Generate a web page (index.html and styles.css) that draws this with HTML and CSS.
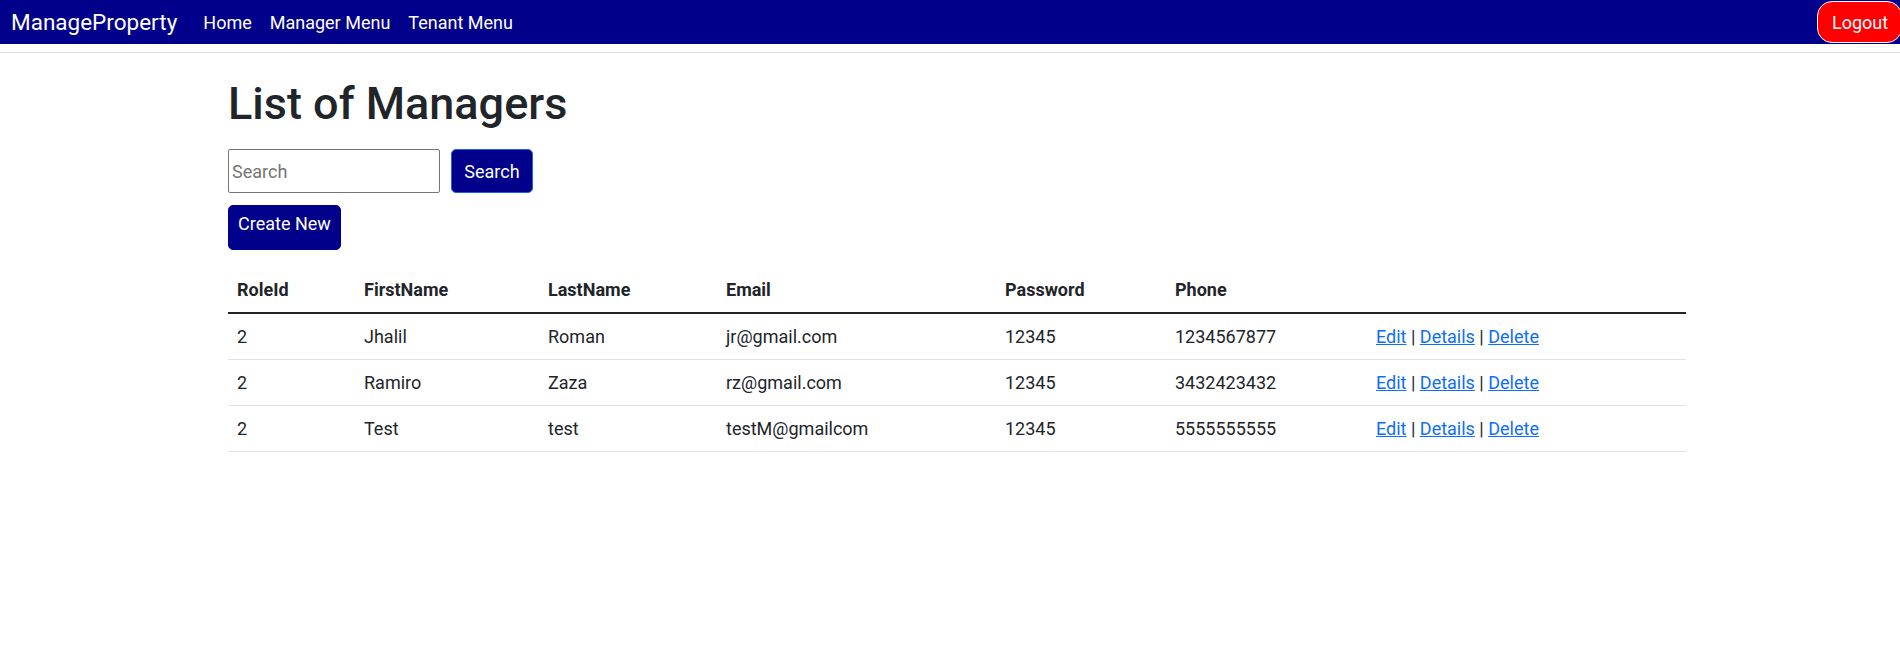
FILE: index.html
```html
<!DOCTYPE html>
<html lang="en">
<head>
<meta charset="utf-8">
<title>List of Managers - ManageProperty</title>
<link rel="stylesheet" href="styles.css">
</head>
<body>
<header class="site-header">
  <nav class="navbar">
    <a class="brand" href="#">ManageProperty</a>
    <ul class="nav-links">
      <li><a href="#">Home</a></li>
      <li><a href="#">Manager Menu</a></li>
      <li><a href="#">Tenant Menu</a></li>
    </ul>
    <button class="btn-logout" type="button">Logout</button>
  </nav>
</header>
<main class="container">
  <h1 class="page-title">List of Managers</h1>
  <form class="search-form">
    <input class="search-input" type="text" placeholder="Search">
    <button class="btn btn-search" type="button">Search</button>
  </form>
  <a class="btn btn-create" href="#">Create New</a>
  <table class="table">
    <colgroup>
      <col class="c-role"><col class="c-first"><col class="c-last"><col class="c-email"><col class="c-pass"><col class="c-phone"><col class="c-actions">
    </colgroup>
    <thead>
      <tr><th>RoleId</th><th>FirstName</th><th>LastName</th><th>Email</th><th>Password</th><th>Phone</th><th></th></tr>
    </thead>
    <tbody>
      <tr><td>2</td><td>Jhalil</td><td>Roman</td><td>jr@gmail.com</td><td>12345</td><td>1234567877</td><td><a href="#">Edit</a> | <a href="#">Details</a> | <a href="#">Delete</a></td></tr>
      <tr><td>2</td><td>Ramiro</td><td>Zaza</td><td>rz@gmail.com</td><td>12345</td><td>3432423432</td><td><a href="#">Edit</a> | <a href="#">Details</a> | <a href="#">Delete</a></td></tr>
      <tr><td>2</td><td>Test</td><td>test</td><td>testM@gmailcom</td><td>12345</td><td>5555555555</td><td><a href="#">Edit</a> | <a href="#">Details</a> | <a href="#">Delete</a></td></tr>
    </tbody>
  </table>
</main>
</body>
</html>
```

FILE: styles.css
```css
* { box-sizing: border-box; }

html, body {
  margin: 0;
  padding: 0;
  background: #ffffff;
}

body {
  font-family: Roboto, "Liberation Sans", sans-serif;
  font-size: 18px;
  line-height: 27px;
  color: #212529;
  overflow-x: hidden;
}

.site-header {
  padding-bottom: 8px;
  border-bottom: 1px solid #dedede;
}

.navbar {
  display: flex;
  align-items: center;
  height: 44px;
  background: #00008b;
  padding-left: 11px;
  overflow: hidden;
}

.brand {
  color: #ffffff;
  text-decoration: none;
  font-size: 22.5px;
  line-height: normal;
  margin-right: 26px;
}

.nav-links {
  display: flex;
  gap: 18px;
  list-style: none;
  margin: 0;
  padding: 0;
}

.nav-links a {
  color: #ffffff;
  text-decoration: none;
  font-size: 18px;
  line-height: normal;
}

.btn-logout {
  margin-left: auto;
  margin-right: -2px;
  height: 42px;
  width: 85px;
  padding: 0 0 0 14px;
  text-align: left;
  background: #ff0000;
  color: #ffffff;
  border: 1px solid #ffffff;
  border-radius: 15px;
  font-family: inherit;
  font-size: 18px;
}

.container {
  width: 1458px;
  margin-left: calc(50% - 722px);
  padding-top: 24px;
}

.page-title {
  margin: 0 0 18px;
  font-size: 45px;
  line-height: 54px;
  font-weight: 500;
  color: #212529;
}

.search-form {
  display: flex;
  gap: 11px;
  margin: 0 0 12px;
}

.search-input {
  width: 212px;
  height: 44px;
  border: 1px solid #767676;
  border-radius: 2px;
  padding: 0 3px;
  font-family: inherit;
  font-size: 18px;
  color: #212529;
}

.search-input::placeholder {
  color: #757575;
}

.btn {
  display: flex;
  align-items: center;
  justify-content: center;
  background: #00008b;
  color: #ffffff;
  font-family: inherit;
  font-size: 18px;
  text-decoration: none;
  border-radius: 5px;
}

.btn-search {
  width: 82px;
  height: 44px;
  border: 1px solid #1f5fe8;
}

.btn-create {
  width: 113px;
  height: 45px;
  align-items: flex-start;
  padding-top: 4px;
  border: 1px solid #00008b;
  margin-bottom: 17px;
}

.table {
  width: 1458px;
  border-collapse: collapse;
  table-layout: fixed;
}

.c-role { width: 127px; }
.c-first { width: 184px; }
.c-last { width: 178px; }
.c-email { width: 279px; }
.c-pass { width: 170px; }
.c-phone { width: 201px; }
.c-actions { width: 319px; }

.table th,
.table td {
  padding: 9px 9px;
  text-align: left;
  vertical-align: top;
}

.table th {
  font-weight: 700;
  border-bottom: 2px solid #212529;
}

.table td {
  border-bottom: 1px solid #dee2e6;
}

.table a {
  color: #0d6efd;
  text-decoration: underline;
}
```
